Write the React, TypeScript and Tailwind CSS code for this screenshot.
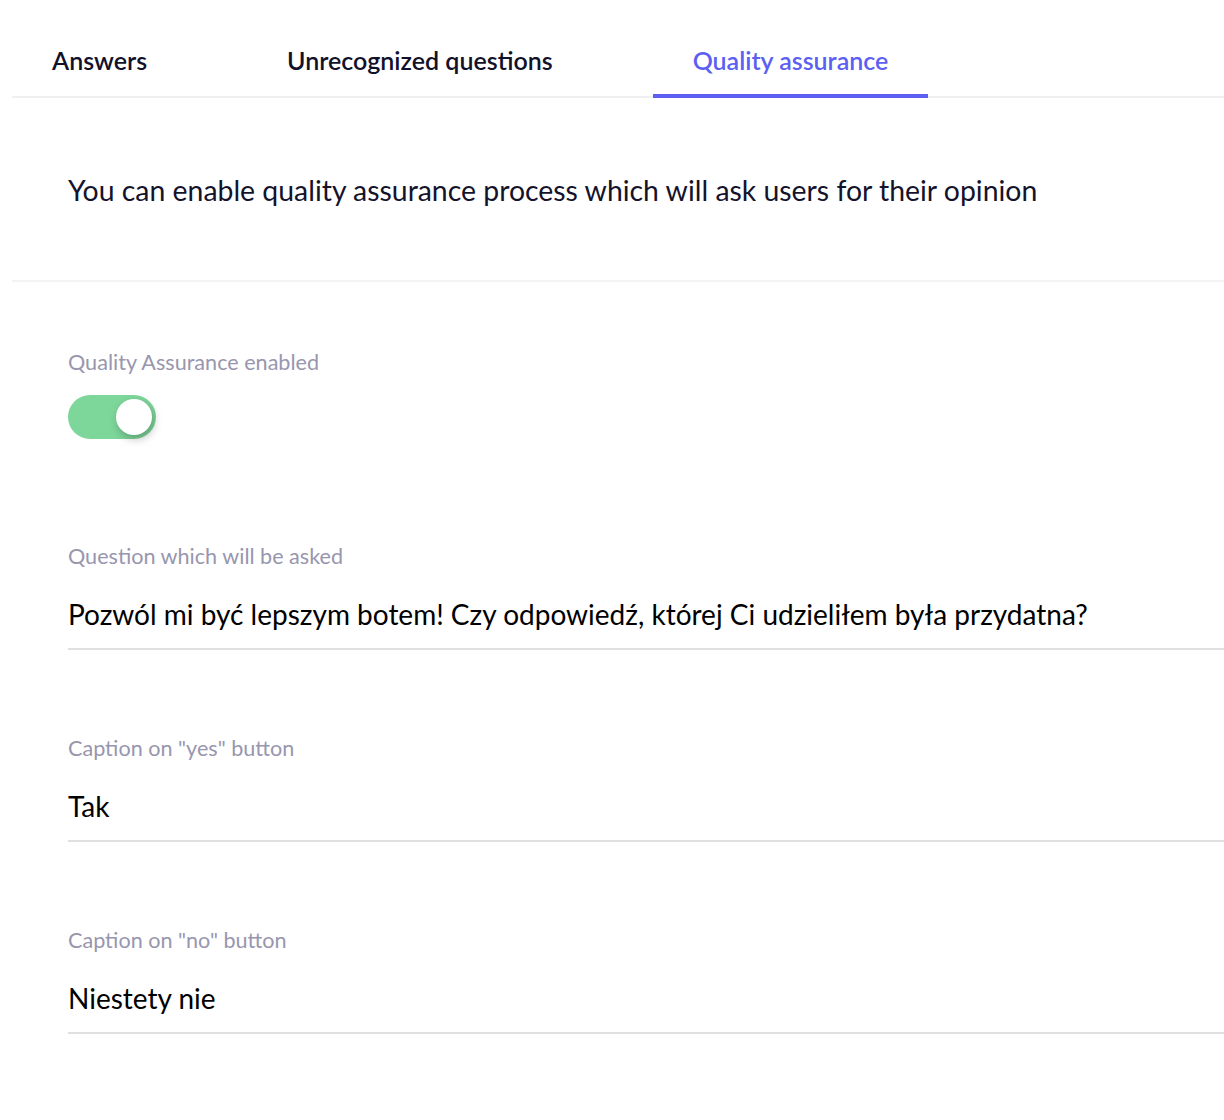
import { useState } from "react";

const tabs = ["Answers", "Unrecognized questions", "Quality assurance"];

function Field({ label, value }: { label: string; value: string }) {
  return (
    <div className="pt-[43px] pb-[41px]">
      <label className="block text-[21.6px] leading-[28px] text-[#9896ae]">{label}</label>
      <input
        defaultValue={value}
        className="mt-[27px] block w-full border-b-2 border-[#e0e0e0] pb-[17px] text-[28px] leading-[34px] text-black outline-none"
      />
    </div>
  );
}

export default function App() {
  const [active, setActive] = useState(2);
  const [enabled, setEnabled] = useState(true);

  return (
    <div className="min-h-[1120px] bg-white pl-[12px] font-['Lato',sans-serif]">
      {/* Tabs */}
      <div className="flex gap-[60px] border-b-2 border-[#f0f0f3] pt-[45px]">
        {tabs.map((t, i) => (
          <button
            key={t}
            onClick={() => setActive(i)}
            className={`-mb-[2px] border-b-4 px-[40px] pb-[19px] text-[25px] leading-[30px] font-semibold ${
              i === active ? "border-[#5d5ff2] text-[#5d5ff2]" : "border-transparent text-[#12112a]"
            }`}
          >
            {t}
          </button>
        ))}
      </div>

      {/* Intro */}
      <div className="border-b-2 border-[#f3f3f5] pl-[56px] pt-[74px] pb-[72px]">
        <p className="text-[28.4px] leading-[36px] text-[#14132b]">
          You can enable quality assurance process which will ask users for their opinion
        </p>
      </div>

      {/* Form */}
      <div className="pl-[56px] pt-[66px]">
        <div className="pb-[60px]">
          <label className="block text-[21.6px] leading-[28px] text-[#9896ae]">Quality Assurance enabled</label>
          <button
            onClick={() => setEnabled(!enabled)}
            className={`mt-[19px] flex h-[44px] w-[88px] items-center rounded-full px-[4px] ${
              enabled ? "justify-end bg-[#7dd69a]" : "justify-start bg-[#dcdce3]"
            }`}
          >
            <span className="h-[36px] w-[36px] rounded-full bg-white shadow-[2px_4px_8px_rgba(0,0,0,0.25)]" />
          </button>
        </div>

        <Field label="Question which will be asked" value="Pozwól mi być lepszym botem! Czy odpowiedź, której Ci udzieliłem była przydatna?" />
        <Field label='Caption on "yes" button' value="Tak" />
        <Field label='Caption on "no" button' value="Niestety nie" />
      </div>
    </div>
  );
}
